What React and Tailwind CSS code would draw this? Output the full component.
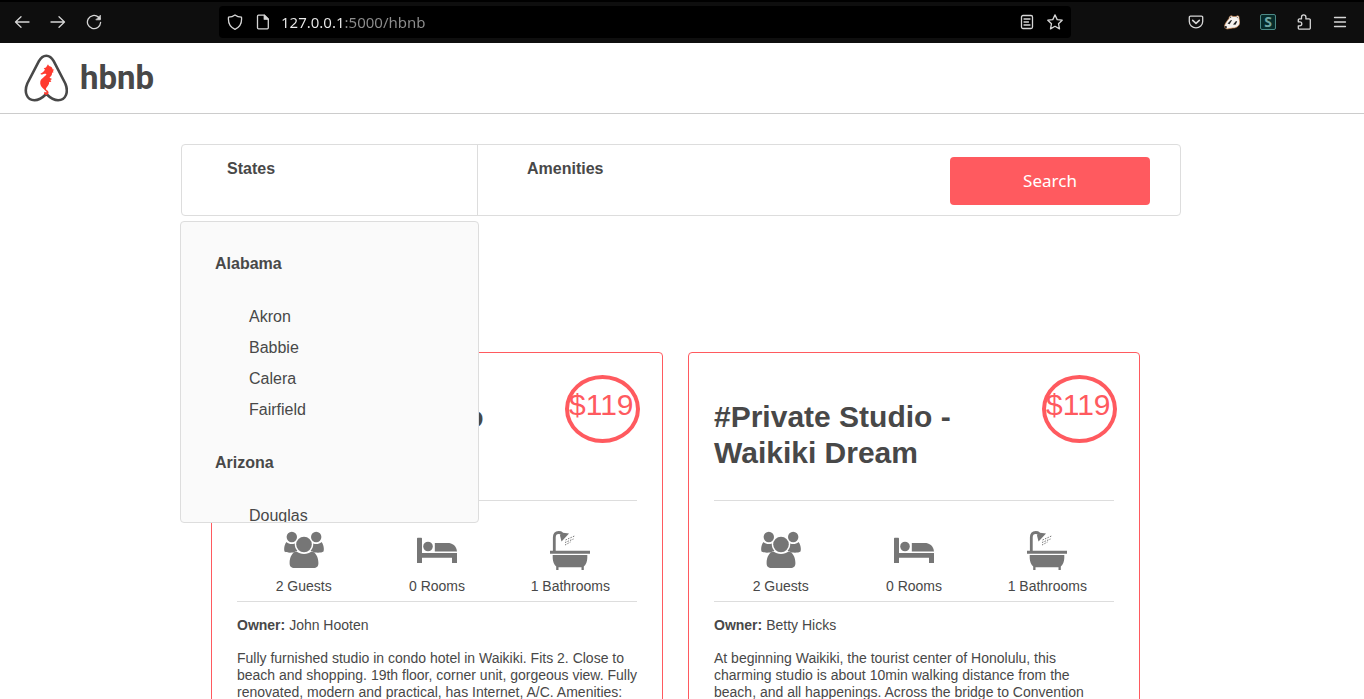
const states = [
  { name: "Alabama", cities: ["Akron", "Babbie", "Calera", "Fairfield"] },
  { name: "Arizona", cities: ["Douglas"] },
];

const places = [
  {
    title: "Furnished Studio",
    price: 119,
    guests: 2,
    rooms: 0,
    baths: 1,
    owner: "John Hooten",
    text: "Fully furnished studio in condo hotel in Waikiki. Fits 2. Close to beach and shopping. 19th floor, corner unit, gorgeous view. Fully renovated, modern and practical, has Internet, A/C. Amenities:",
  },
  {
    title: "#Private Studio - Waikiki Dream",
    price: 119,
    guests: 2,
    rooms: 0,
    baths: 1,
    owner: "Betty Hicks",
    text: "At beginning Waikiki, the tourist center of Honolulu, this charming studio is about 10min walking distance from the beach, and all happenings. Across the bridge to Convention",
  },
];

function Stroke({ children, className = "" }) {
  return (
    <svg
      viewBox="0 0 16 16"
      className={`size-4 ${className}`}
      fill="none"
      stroke="currentColor"
      strokeWidth="1.3"
      strokeLinecap="round"
      strokeLinejoin="round"
      aria-hidden="true"
    >
      {children}
    </svg>
  );
}

function ToolButton({ label, children }) {
  return (
    <button type="button" aria-label={label} className="flex size-4 items-center justify-center">
      {children}
    </button>
  );
}

function Toolbar() {
  return (
    <div className="flex h-[43px] shrink-0 items-center border-t-2 border-black bg-[#0e0e0e] pr-4 pb-0.5 pl-3.5 text-[#d6d6d6]">
      <div className="flex w-[205px] shrink-0 gap-5">
        <ToolButton label="Back">
          <Stroke><path d="M15 8H1.5M7 2.8 1.5 8 7 13.2" /></Stroke>
        </ToolButton>
        <ToolButton label="Forward">
          <Stroke><path d="M1 8h13.5M9 2.8 14.5 8 9 13.2" /></Stroke>
        </ToolButton>
        <ToolButton label="Reload">
          <Stroke>
            <path d="M14.6 8.5a6.6 6.6 0 1 1-2.2-5.4l1.4 1.4" />
            <path d="M14.4 1.6v4.2h-4.2z" fill="currentColor" strokeWidth="0.8" />
          </Stroke>
        </ToolButton>
      </div>
      <div className="flex h-8 min-w-0 flex-1 items-center rounded bg-black px-2">
        <Stroke className="shrink-0">
          <path d="M8 .9c2 1.6 4.2 2.2 6.5 2.3.5 5-1.5 10-6.5 12.1C3 13.2 1 8.2 1.5 3.2 3.8 3.1 6 2.5 8 .9z" />
        </Stroke>
        <Stroke className="ml-3 shrink-0">
          <path d="M3.500 1.200h5.800l4 4v8.600a1 1 0 0 1-1 1H3.500a1 1 0 0 1-1-1V2.200a1 1 0 0 1 1-1z" />
          <path d="M9.300 1.200v4h4z" fill="currentColor" />
        </Stroke>
        <input
          type="text"
          aria-label="Address"
          defaultValue="127.0.0.1:5000/hbnb"
          className="ml-2.5 min-w-0 flex-1 bg-[linear-gradient(90deg,#ececec_64px,#8e8e8e_64px)] bg-clip-text font-['Noto_Sans',sans-serif] text-[15px] leading-5 text-transparent caret-white outline-none"
        />
        <div className="flex gap-3">
          <ToolButton label="Reader view">
            <Stroke>
              <rect x="2.500" y="1.500" width="11" height="13" rx="1.500" />
              <path d="M5 5h6M5 8h4.500M5 11h6" />
            </Stroke>
          </ToolButton>
          <ToolButton label="Bookmark">
            <Stroke>
              <path d="m8 .9 2.200 4.700 5 .6-3.700 3.500 1 5.200L8 12.300l-4.500 2.600 1-5.200L.8 6.200l5-.6z" />
            </Stroke>
          </ToolButton>
        </div>
      </div>
      <div className="ml-[117px] flex shrink-0 gap-5">
        <ToolButton label="Pocket">
          <Stroke>
            <path d="M2.500 2.200h11a1.200 1.200 0 0 1 1.200 1.200V7.500a6.700 6.300 0 0 1-13.400 0V3.400a1.200 1.200 0 0 1 1.200-1.200z" />
            <path d="M4.700 6.300 8 9.400l3.300-3.100" strokeWidth="1.600" />
          </Stroke>
        </ToolButton>
        <ToolButton label="Privacy Badger">
          <svg viewBox="0 0 16 16" className="size-4" aria-hidden="true">
            <path d="M.5 12C1 9 3.500 6.500 5 4.500 5 2 7.500 1 8.800 2.400L12 2.600c1.500-1.600 3.600-.6 3 1.400l.8 4c.2 3.400-3 6.200-7 6L3 15 .3 13.500z" fill="#f4f1ee" stroke="#c9824c" strokeWidth=".7" />
            <path d="M3.500 9.500 7 6l1 .3-2.400 4zM9 10.500l3-3.500 1.200.6-1.700 3.200z" fill="#222" />
            <path d="M.8 12.500h1.600v1.300H.8zM6 3.500l1.200-.4M12.800 3.200l.9.500" fill="#222" stroke="#222" strokeWidth=".8" />
          </svg>
        </ToolButton>
        <ToolButton label="Stylus">
          <span className="flex size-4 items-center justify-center rounded-xs border border-[#4d8a86] bg-[#062b2a] font-['Noto_Sans',sans-serif] text-[14px] leading-none font-bold text-[#6fa5a1]">
            S
          </span>
        </ToolButton>
        <ToolButton label="Extensions">
          <Stroke>
            <path d="M5.500 4.900V3a2.200 2.200 0 0 1 4.400 0v1.900h3.200a1.200 1.200 0 0 1 1.200 1.200v7.900a1.200 1.200 0 0 1-1.200 1.200H3.500a1.200 1.200 0 0 1-1.200-1.200v-2.200h1.500a2 2 0 0 0 0-4H2.300V6.100a1.200 1.200 0 0 1 1.200-1.200z" />
          </Stroke>
        </ToolButton>
        <ToolButton label="Menu">
          <Stroke><path d="M2.500 3.500h11M2.500 8h11M2.500 12.500h11" /></Stroke>
        </ToolButton>
      </div>
    </div>
  );
}

function Logo() {
  return (
    <a href="#top" className="flex items-center gap-3 text-[#484848]">
      <svg viewBox="0 0 44 48" className="h-12 w-11" aria-hidden="true">
        <path
          d="M22.300 1.800c3.400 0 5.400 1.800 7.400 5.400l11.600 22.300c3.600 8.600.4 16.800-7.200 16.800-4.800 0-8.400-3-11.800-6.300-3.400 3.300-7 6.300-11.800 6.300-7.600 0-10.800-8.200-7.200-16.800L14.900 7.200c2-3.600 4-5.400 7.400-5.400z"
          fill="none"
          stroke="#484848"
          strokeWidth="2.600"
        />
        <path
          d="M24 10.300c.3 1.200 1.300 1.900 2.500 2.300 1.200.4 2 1.400 2 2.600l1.700.5-1.300 1.200.7 1.300-1.500.6c.1 2-1 3.600-2.600 4.900l2.600 1.200-1.700 1.100.9 1.800-2.100.3c0 2.300-1.300 4.100-2.600 5.500-1 1.200-.8 2 .4 2.700 2.300 1.300 2 4.300-.4 4.600-2.200.2-3.500-2.100-1.700-3.200l.9.900c.7.400 1.300-.2.7-.9-.6-.8-1.500-1.300-2.300-2.200-2.600-2.200-4.600-4.900-3.900-8.100.8-3.200 4.700-4.500 6.200-7.200-1.700-.6-2.900-.3-4.200.3-1 .3-1.900-.2-1.700-1.100 2.200-.7 3.700-2 4.300-3.800l-1.200-1.300 2.300-.7z"
          fill="#ff3b2f"
        />
      </svg>
      <span className="font-['Roboto',sans-serif] text-[33px] leading-10 font-bold">hbnb</span>
    </a>
  );
}

function GuestsIcon() {
  return (
    <svg viewBox="0 0 40 40" className="size-10" fill="#767676" aria-hidden="true">
      <path d="M2.500 12c1.500 1.600 3.200 2 5.300 2 1 0 2-.2 3-.6-.2 3 .6 5.400 2.600 7.400-1.500.3-2.700.9-3.600 1.700-4.200.3-7.600.3-9.300-1C-.5 18 .8 14 2.500 12zM37.500 12c-1.500 1.600-3.200 2-5.300 2-1 0-2-.2-3-.6.2 3-.6 5.400-2.600 7.400 1.500.3 2.700.9 3.600 1.700 4.200.3 7.600.3 9.300-1 1-3.500-.3-7.500-2-9.500z" />
      <circle cx="7.800" cy="7" r="5.200" />
      <circle cx="32.200" cy="7" r="5.200" />
      <circle cx="20" cy="14.500" r="7.800" />
      <path d="M12.500 21.500c2 1.600 4.500 2.400 7.500 2.400s5.500-.8 7.500-2.400c4 .4 6.900 5.500 6.900 11.500 0 3.600-1.600 5-5 5H10.600c-3.400 0-5-1.400-5-5 0-6 2.900-11.100 6.900-11.500z" />
    </svg>
  );
}

function BedIcon() {
  return (
    <svg viewBox="0 0 40 40" className="size-10" fill="#767676" aria-hidden="true">
      <path d="M0 8.800c0-.7.400-1 1-1h3c.6 0 1 .3 1 1V23h35v10h-5v-5.300H5V33H0z" />
      <circle cx="11" cy="16.500" r="4.800" />
      <path d="M17.800 13H30.500c5 0 8.900 2.600 9.500 8.500H17.800z" />
    </svg>
  );
}

function BathIcon() {
  return (
    <svg viewBox="0 0 40 40" className="size-10" fill="#767676" aria-hidden="true">
      <path d="M4.300 21V7.500c0-3.400 1.400-5 4.400-5 1.500 0 2.500.3 3.300 1" fill="none" stroke="#767676" strokeWidth="2.800" />
      <path d="m11 2.500 8 1-7.500 8-1.500-6z" />
      <path d="m15.500 10 9-4M15 12.500 23.500 9M15 15l5.500-3" stroke="#767676" strokeWidth="1" strokeDasharray="1.500 1.200" />
      <path d="M0 20.700h40v3H0zM2.700 25h34.600v3c0 3.500-1.500 7-3.500 8.500V41h-2.300v-3.800H8.500V41H6.200v-4.500C4.200 35 2.700 31.500 2.700 28z" />
    </svg>
  );
}

function Fact({ icon, children }) {
  return (
    <div className="flex flex-1 flex-col items-center gap-1.5">
      {icon}
      <span className="leading-5">{children}</span>
    </div>
  );
}

function PlaceCard({ place }) {
  return (
    <article className="min-w-0 flex-1 rounded-sm border border-[#ff5a5f] px-[25px] pt-[22px] pb-6 text-sm leading-[17px]">
      <div className="flex h-[126px] items-start justify-between border-b border-[#dddddd]">
        <h2 className="max-w-[280px] pt-6 text-[30px] leading-9 font-bold">{place.title}</h2>
        <div className="-mr-[3px] h-[68px] w-[75px] rounded-[50%] border-4 border-[#ff5a5f] pt-2 text-[30px] leading-9 text-[#ff5a5f]">
          <span>${place.price}</span>
        </div>
      </div>
      <div className="flex border-b border-[#dddddd] pt-[29px] pb-[5px]">
        <Fact icon={<GuestsIcon />}>{place.guests} Guests</Fact>
        <Fact icon={<BedIcon />}>{place.rooms} Rooms</Fact>
        <Fact icon={<BathIcon />}>{place.baths} Bathrooms</Fact>
      </div>
      <p className="pt-[15px]"><b>Owner:</b> {place.owner}</p>
      <p className="-mr-px pt-4">{place.text}</p>
    </article>
  );
}

export default function App() {
  return (
    <div className="flex h-screen flex-col overflow-hidden bg-white font-['Liberation_Sans',Arial,sans-serif] text-[#484848]">
      <Toolbar />
      <div id="top" className="min-h-0 flex-1 overflow-hidden">
        <header className="flex h-[71px] items-center border-b border-[#cccccc] pl-6">
          <Logo />
        </header>
        <div className="pr-0.5">
          <main className="mx-auto max-w-[1000px] pt-[30px]">
            <section className="flex h-[72px] rounded-sm border border-[#dddddd] bg-white">
              <div className="relative w-[296px] border-r border-[#dddddd] pt-[15px] pl-[45px]">
                <h3 className="text-base leading-[18px] font-bold">States</h3>
                <div className="absolute top-[76px] -left-0.5 z-10 h-[302px] w-[299px] overflow-hidden rounded-sm border border-[#dddddd] bg-[#fafafa] pt-[26px] pl-[34px] text-base leading-[31px]">
                  <ul className="flex flex-col gap-[22px]">
                    {states.map((state) => (
                      <li key={state.name} className="flex flex-col gap-[22px]">
                        <h4 className="font-bold">{state.name}</h4>
                        <ul className="pl-[34px]">
                          {state.cities.map((city) => (
                            <li key={city}>{city}</li>
                          ))}
                        </ul>
                      </li>
                    ))}
                  </ul>
                </div>
              </div>
              <div className="flex-1 pt-[15px] pl-[49px]">
                <h3 className="text-base leading-[18px] font-bold">Amenities</h3>
              </div>
              <button
                type="button"
                className="mt-3 mr-[30px] h-12 w-[200px] rounded-sm bg-[#ff5a5f] font-['Noto_Sans',sans-serif] text-[17px] text-white"
              >
                Search
              </button>
            </section>
            <section className="flex gap-[25px] pt-[136px] pr-[41px] pl-[30px]">
              {places.map((place) => (
                <PlaceCard key={place.owner} place={place} />
              ))}
            </section>
          </main>
        </div>
      </div>
    </div>
  );
}
